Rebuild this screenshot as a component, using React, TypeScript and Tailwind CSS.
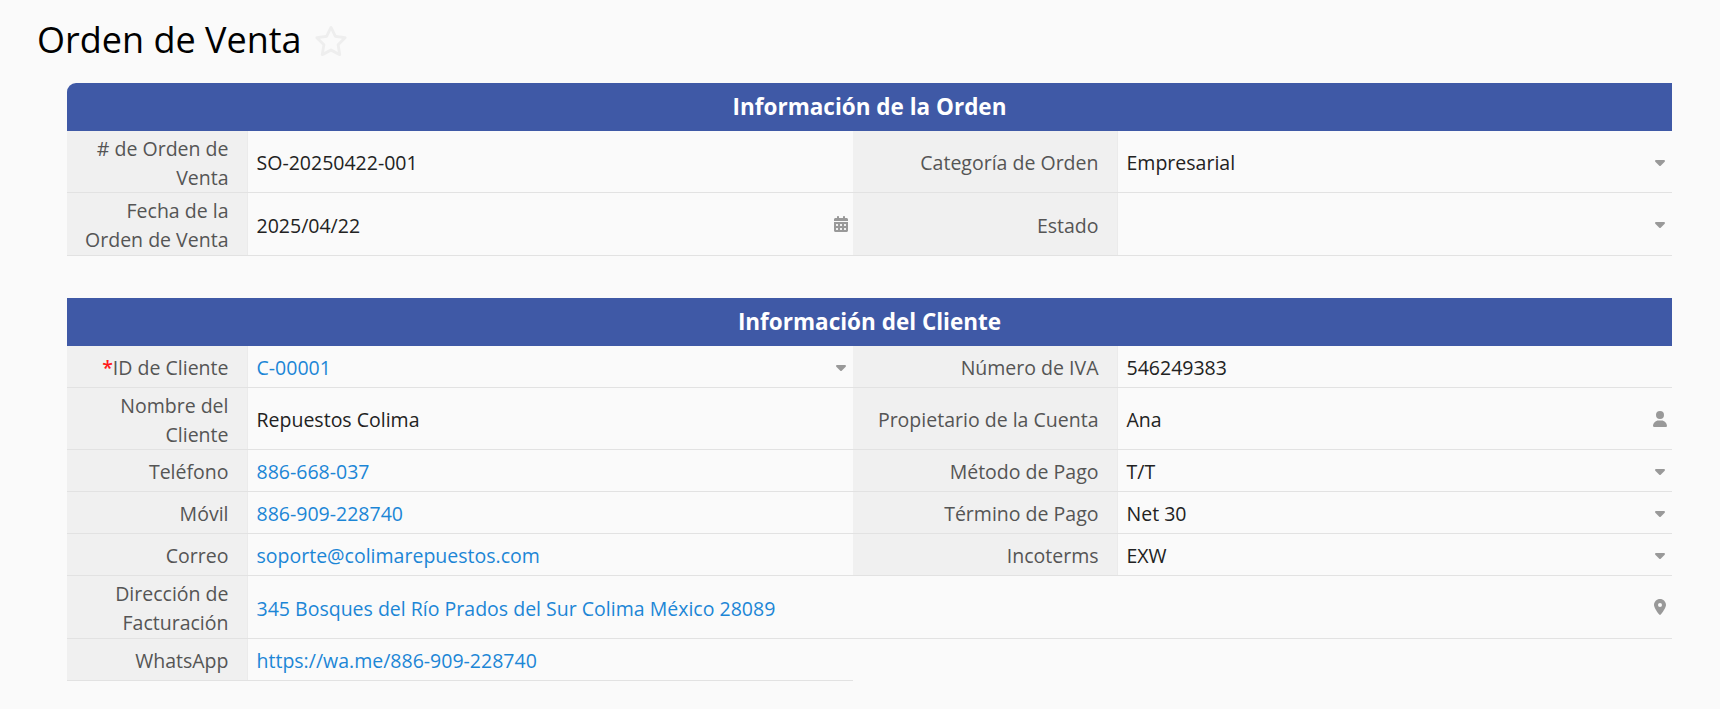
import React from 'react';
import { FaCalendarDays, FaCaretDown, FaLocationDot, FaRegStar, FaUser } from 'react-icons/fa6';

interface Field {
  label: string;
  value: string;
  required?: boolean;
  link?: boolean;
  icon?: 'caret' | 'calendar' | 'user' | 'pin';
}

interface Row {
  height: string;
  left: Field;
  right?: Field;
  wide?: boolean;
}

const orderRows: Row[] = [
  {
    height: 'h-[62px]',
    left: { label: '# de Orden de Venta', value: 'SO-20250422-001' },
    right: { label: 'Categoría de Orden', value: 'Empresarial', icon: 'caret' },
  },
  {
    height: 'h-[63px]',
    left: { label: 'Fecha de la Orden de Venta', value: '2025/04/22', icon: 'calendar' },
    right: { label: 'Estado', value: '', icon: 'caret' },
  },
];

const clientRows: Row[] = [
  {
    height: 'h-[42px]',
    left: { label: 'ID de Cliente', value: 'C-00001', required: true, link: true, icon: 'caret' },
    right: { label: 'Número de IVA', value: '546249383' },
  },
  {
    height: 'h-[62px]',
    left: { label: 'Nombre del Cliente', value: 'Repuestos Colima' },
    right: { label: 'Propietario de la Cuenta', value: 'Ana', icon: 'user' },
  },
  {
    height: 'h-[42px]',
    left: { label: 'Teléfono', value: '886-668-037', link: true },
    right: { label: 'Método de Pago', value: 'T/T', icon: 'caret' },
  },
  {
    height: 'h-[42px]',
    left: { label: 'Móvil', value: '886-909-228740', link: true },
    right: { label: 'Término de Pago', value: 'Net 30', icon: 'caret' },
  },
  {
    height: 'h-[42px]',
    left: { label: 'Correo', value: 'soporte@colimarepuestos.com', link: true },
    right: { label: 'Incoterms', value: 'EXW', icon: 'caret' },
  },
  {
    height: 'h-[63px]',
    wide: true,
    left: {
      label: 'Dirección de Facturación',
      value: '345 Bosques del Río Prados del Sur Colima México 28089',
      link: true,
      icon: 'pin',
    },
  },
  {
    height: 'h-[42px]',
    left: { label: 'WhatsApp', value: 'https://wa.me/886-909-228740', link: true },
  },
];

const FieldIcon: React.FC<{ icon: Field['icon'] }> = ({ icon }) => (
  <span className="flex w-[25px] shrink-0 justify-center text-[#999999]">
    {icon === 'caret' && <FaCaretDown size={16} />}
    {icon === 'calendar' && <FaCalendarDays size={16} />}
    {icon === 'user' && <FaUser size={16} />}
    {icon === 'pin' && <FaLocationDot size={16} />}
  </span>
);

const FieldCell: React.FC<{ field: Field; labelWidth: string }> = ({ field, labelWidth }) => (
  <>
    <div
      className={`${labelWidth} flex shrink-0 items-center justify-end border-r border-[#ebebeb] bg-[#f0f0f0] pt-[2px] pr-[18.5px] text-right leading-[29px] text-[#555555]`}
    >
      <span>
        {field.required && <span className="font-semibold text-[#ff1a1a]">*</span>}
        {field.label}
      </span>
    </div>
    <div className="flex min-w-0 flex-1 items-center justify-between pl-[8.5px]">
      <span className={`pt-[2px] leading-[29px] ${field.link ? 'text-[#1c86d6]' : 'text-[#222222]'}`}>{field.value}</span>
      {field.icon && <FieldIcon icon={field.icon} />}
    </div>
  </>
);

const Section: React.FC<{ title: string; rows: Row[]; rounded?: boolean }> = ({ title, rows, rounded }) => (
  <section>
    <h2
      className={`flex h-12 items-center justify-center bg-[#3f59a6] text-[22.5px] font-bold text-white ${rounded ? 'rounded-tl-[9px]' : ''}`}
    >
      {title}
    </h2>
    {rows.map((row) => (
      <div key={row.left.label} className={`flex ${row.height}`}>
        <div className={`flex border-b border-[#e2e2e2] ${row.wide ? 'w-full' : 'w-[786px]'}`}>
          <FieldCell field={row.left} labelWidth="w-[181px]" />
        </div>
        {row.right && (
          <div className="flex flex-1 border-b border-[#e2e2e2]">
            <FieldCell field={row.right} labelWidth="w-[265px]" />
          </div>
        )}
      </div>
    ))}
  </section>
);

const App: React.FC = () => {
  return (
    <main className="h-[709px] overflow-hidden bg-[#fafafa] pr-12 pl-[67px] font-['Open_Sans',sans-serif] text-[19.53px]">
      <header className="-ml-[30px] flex h-[83px] items-center gap-[12px] pb-1">
        <h1 className="text-[36px] text-[#000000]">Orden de Venta</h1>
        <FaRegStar size={34} className="mt-[3px] text-[#eeeeee]" />
      </header>
      <div className="flex flex-col gap-[42px]">
        <Section title="Información de la Orden" rows={orderRows} rounded />
        <Section title="Información del Cliente" rows={clientRows} />
      </div>
    </main>
  );
};

export default App;
